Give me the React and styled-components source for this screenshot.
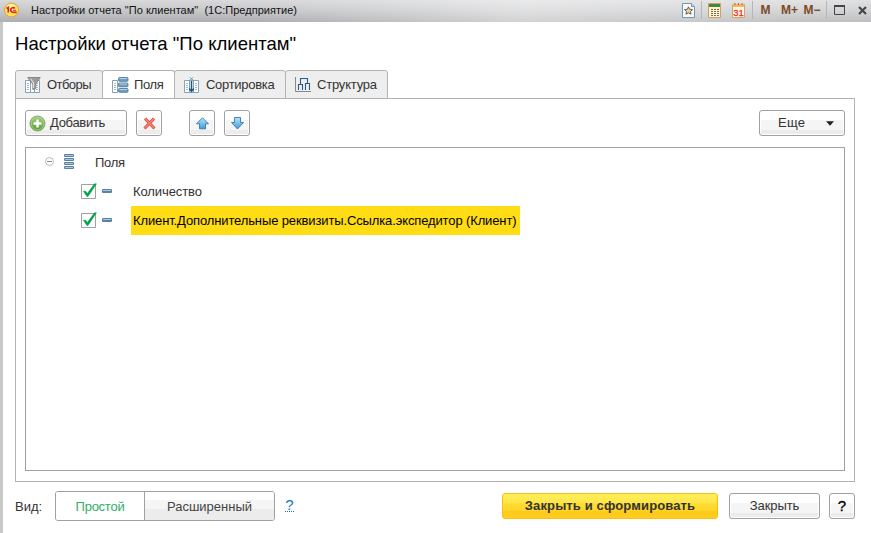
import React from "react";
import styled, { createGlobalStyle, css } from "styled-components";

const Global = createGlobalStyle`
  * { box-sizing: border-box; }
  body { margin: 0; background: #fff; overflow: hidden; }
  button { font: inherit; color: inherit; margin: 0; padding: 0; }
  svg { display: block; flex: none; }
`;

const Window = styled.div`
  width: 871px;
  height: 533px;
  display: flex;
  flex-direction: column;
  background: #fff;
  font: 13px/16px "Liberation Sans", Arial, sans-serif;
  color: #333;
`;

const TitleBar = styled.header`
  height: 22px;
  flex: none;
  display: flex;
  align-items: center;
  padding: 0 0 2px 4px;
  background: linear-gradient(90deg, rgba(255, 255, 255, 0) 30%, rgba(255, 255, 255, 0.45) 60%, rgba(255, 255, 255, 0.2)),
    linear-gradient(#d9d9da, #c6c7c9 50%, #acaeb1);
`;

const Text = styled.span`
  white-space: pre;
  letter-spacing: ${(p) => p.$track || 0}px;
`;

const Caption = styled(Text)`
  margin-left: 12px;
  flex: 1;
  font-size: 11px;
  color: #111;
`;

const Tools = styled.div`
  display: flex;
  align-items: center;
  height: 20px;
`;

const ToolSlot = styled.div`
  width: ${(p) => p.$w}px;
  margin-left: ${(p) => p.$gap || 0}px;
  height: 18px;
  display: flex;
  align-items: center;
  justify-content: center;
  font-weight: bold;
  font-size: 12px;
  color: #7d4a28;
  border-left: 1px solid ${(p) => (p.$line ? "#b4b6b9" : "transparent")};
`;

const Body = styled.main`
  flex: 1;
  display: flex;
  flex-direction: column;
  padding: 9px 16px 0 12px;
  border-left: 3px solid #c8c8c8;
`;

const Heading = styled.h1`
  margin: 0;
  height: 39px;
  font-size: 18.5px;
  line-height: 25px;
  font-weight: normal;
  color: #000;
`;

const Tabs = styled.nav`
  display: flex;
  height: 29px;
  flex: none;
  margin-bottom: -1px;
`;

const Tab = styled.button`
  width: ${(p) => p.$w}px;
  margin-right: -1px;
  height: 29px;
  display: flex;
  align-items: center;
  padding: 0 0 0 9px;
  gap: 6px;
  border: 1px solid #b3b3b3;
  border-radius: 3px 3px 0 0;
  background: #eee;
  ${(p) =>
    p.$active &&
    css`
      gap: 5px;
      background: #fff;
      border-bottom-color: #fff;
    `}
`;

const Panel = styled.section`
  width: 840px;
  height: 384px;
  flex: none;
  border: 1px solid #b3b3b3;
  padding: 11px 9px 10px;
  display: flex;
  flex-direction: column;
  gap: 11px;
`;

const Toolbar = styled.div`
  display: flex;
  height: 26px;
  flex: none;
`;

const Button = styled.button`
  width: ${(p) => p.$w}px;
  height: 26px;
  margin-left: ${(p) => p.$gap || 0}px;
  display: flex;
  align-items: center;
  justify-content: center;
  border: 1px solid #a0a0a0;
  border-radius: 3px;
  background: linear-gradient(#fff 0 38%, #f5f5f5 38% 80%, #ececec 80%);
  box-shadow: inset 0 0 0 1px #fff;
`;

const AddButton = styled(Button)`
  justify-content: flex-start;
  padding-left: 3px;
  gap: 4px;
`;

const MoreButton = styled(Button)`
  margin-left: auto;
  justify-content: flex-start;
  padding-left: 18px;
  gap: 21px;
`;

const PrimaryButton = styled(Button)`
  border-color: #fabd10;
  background: linear-gradient(#fff05c, #ffe548 38%, #ffdd32 40%, #ffd42a 70%, #ffca18 72%, #ffcd20);
  box-shadow: none;
  font-weight: bold;
`;

const Tree = styled.div`
  flex: 1;
  border: 1px solid #a0a0a0;
  background: #fff;
`;

const TreeRow = styled.div`
  height: 29px;
  display: flex;
  align-items: center;
  padding-left: ${(p) => p.$indent}px;
`;

const Cell = styled.div`
  width: ${(p) => p.$w}px;
  flex: none;
  padding-bottom: 2px;
`;

const ItemLabel = styled.div`
  height: 29px;
  display: flex;
  align-items: center;
  padding: 0 3px 0 2px;
  ${(p) =>
    p.$selected &&
    css`
      width: 389px;
      background: #ffdc14;
      color: #000;
    `}
`;

const Footer = styled.footer`
  display: flex;
  align-items: center;
  width: 840px;
  height: 30px;
  margin-top: 9px;
`;

const FieldLabel = styled.div`
  width: 40px;
  padding-top: 1px;
`;

const Segments = styled.div`
  width: 220px;
  height: 30px;
  display: flex;
  border: 1px solid #a0a0a0;
  border-radius: 3px;
  overflow: hidden;
`;

const Segment = styled.button`
  width: ${(p) => p.$w}px;
  padding-top: 1px;
  border: 0;
  color: ${(p) => (p.$active ? "#2fae66" : "#444")};
  background: ${(p) => (p.$active ? "#fff" : "linear-gradient(#fff 0 28%, #f5f5f5 28% 62%, #ececec 62%)")};
  & + & {
    border-left: 1px solid #a0a0a0;
  }
`;

const HelpLink = styled.a`
  margin: 0 auto 2px 10px;
  width: 9px;
  font-size: 15px;
  line-height: 13px;
  text-align: center;
  color: #1474c4;
  border-bottom: 1px dotted #1474c4;
`;

const HelpMark = styled.span`
  font-size: 15px;
  color: #000;
  -webkit-text-stroke: 0.3px #000;
`;

const Logo = () => (
  <svg width="15" height="16" viewBox="0 0 15 16">
    <circle cx="7.5" cy="8" r="7" fill="#ffe14f" stroke="#e0a050" />
    <circle cx="7" cy="6.500" r="4.500" fill="#fff3a8" />
    <path d="M2.500 6.500 4.300 5.500V10.500M10.800 6.500C9.800 5 6.700 5.500 6.700 8s1.800 2.300 6 2.300" fill="none" stroke="#e0201a" strokeWidth="1.700" />
    <path d="M9 8.300h3" stroke="#e0201a" />
  </svg>
);

const StarPage = () => (
  <svg width="13" height="15" viewBox="0 0 13 15">
    <path d="M.5.5h9l3 3v11H.5z" fill="#f5fafd" stroke="#7895ad" />
    <path d="M9.5.5v3h3" fill="#cddde9" stroke="#7895ad" />
    <path d="m6.5 3.8 1.2 2.5 2.8.3-2 1.9.5 2.7-2.5-1.3L4 11.2l.5-2.7-2-1.9 2.8-.3z" fill="#ead29c" stroke="#5e554b" strokeWidth=".9" />
  </svg>
);

const Calculator = () => (
  <svg width="13" height="15" viewBox="0 0 13 15">
    <path d="M.5.5h12v14H.5z" fill="#fff3d2" stroke="#cba06b" />
    <path d="M1 1h11v3H1z" fill="#3e8b3d" />
    {[6, 8, 10, 12].map((y) => (
      <path key={y} d={`M3 ${y}.5h8`} stroke={y === 6 ? "#bf4431" : "#6e7451"} strokeDasharray="2 1" />
    ))}
  </svg>
);

const Calendar = () => (
  <svg width="13" height="15" viewBox="0 0 13 15">
    <path d="M.5 1.5h12v13H.5z" fill="#fff6e4" stroke="#d8a368" />
    <path d="M1 1h11v3H1z" fill="#f3b75e" />
    <path d="M3 0v3M6.5 0v3M10 0v3" stroke="#a46a3e" strokeDasharray="2 1" />
    <text x="6.5" y="12.8" textAnchor="middle" fontFamily="Liberation Sans" fontWeight="normal" fontSize="9.500" fill="#f02a1c" stroke="#f02a1c" strokeWidth=".25">31</text>
  </svg>
);

const Maximize = () => (
  <svg width="11" height="10" viewBox="0 0 11 10">
    <path d="M.5 1.5h10v8H.5z" fill="none" stroke="#444" />
    <path d="M0 1h11" stroke="#444" strokeWidth="2" />
  </svg>
);

const Close = () => (
  <svg width="9" height="9" viewBox="0 0 9 9">
    <path d="m1 1 7 7M8 1 1 8" stroke="#444" strokeWidth="2.1" />
  </svg>
);

const Columns = ({ wide }) => (
  <>
    <path d="M.5 3.5h5v12h-5z" fill="#fff" stroke="#86a1b9" />
    <path d="M2 6.5h2M2 8.5h2M2 10.5h2M2 12.5h2" stroke="#a3b9cc" />
    {wide && (
      <>
        <path d="M9.5 3.5h5v12h-5z" fill="#fff" stroke="#86a1b9" />
        <path d="M11 6.5h2M11 8.5h2M11 10.5h2M11 12.5h2" stroke="#a3b9cc" />
      </>
    )}
  </>
);

const FilterIcon = () => (
  <svg width="16" height="16" viewBox="0 0 16 16">
    <Columns wide />
    <path d="M5.500 8v7.500h4V8" fill="#fff" stroke="#86a1b9" />
    <path d="M2.700.5h12.600L10.800 7v4.500l-3 1V7z" fill="#9b9b9b" stroke="#777" strokeWidth=".8" />
    <path d="M5.500 1.500 8.500 6v5" fill="none" stroke="#dedede" strokeWidth="1.200" />
  </svg>
);

const FieldsIcon = () => (
  <svg width="17" height="16" viewBox="0 0 17 16">
    <Columns />
    {[0, 5.5, 11].map((y) => (
      <g key={y}>
        <rect x="6.5" y={y + 0.5} width="9.500" height="3.800" rx="1" fill="#6f9dc0" stroke="#547c9e" strokeWidth=".9" />
        <path d={`M7.500 ${y + 1.5}h7.500`} stroke="#b5d1e5" />
      </g>
    ))}
  </svg>
);

const SortIcon = () => (
  <svg width="16" height="16" viewBox="0 0 16 16">
    <Columns wide />
    <path d="M5.5 3.5h4v12h-4z" fill="#d9edf9" stroke="#86a1b9" />
    <path d="M7.5 4v10M5.2 11.5l2.3 3 2.3-3" fill="none" stroke="#17568e" strokeWidth="1.3" />
    <path d="m5.5 0 4 3.5M9.5 0l-4 3.5" stroke="#3b88bd" strokeDasharray="1.2 .6" />
  </svg>
);

const StructureIcon = () => (
  <svg width="16" height="15" viewBox="0 0 16 15">
    <path d="M.5 0v14.5H16" fill="none" stroke="#888" />
    <path d="M3.500 13V7.500h4V13M5.500 7V1.500h7V6M10.500 13V6.500h4V13" fill="none" stroke="#2c5d88" strokeWidth="1.100" />
  </svg>
);

const PlusIcon = () => (
  <svg width="17" height="17" viewBox="0 0 17 17">
    <defs>
      <linearGradient id="plusFill" x2="0" y2="1">
        <stop stopColor="#a7d17d" />
        <stop offset="1" stopColor="#4f9b35" />
      </linearGradient>
    </defs>
    <circle cx="8.500" cy="8.500" r="7.500" fill="url(#plusFill)" stroke="#85a66f" />
    <circle cx="8.500" cy="8.500" r="6.300" fill="none" stroke="#b6d994" strokeWidth=".7" />
    <path d="M8.500 4.500v8M4.500 8.500h8" stroke="#fff" strokeWidth="2.400" />
  </svg>
);

const DeleteIcon = () => (
  <svg width="13" height="13" viewBox="0 0 13 13">
    <path d="m2 1.500 9.500 10M11 1.500 1.500 11.500" stroke="#d9473d" strokeWidth="3" />
    <path d="m2.200 1.700 9 9.500M10.800 1.700 1.700 11.200" stroke="#fb8370" strokeWidth="1.500" />
  </svg>
);

const Arrow = ({ down }) => (
  <svg width="13" height="13" viewBox="0 0 13 13">
    <defs>
      <linearGradient id="arrowFill" x2="0" y2="1">
        <stop stopColor="#b7e6fb" />
        <stop offset="1" stopColor="#3e9ad8" />
      </linearGradient>
    </defs>
    <path
      d={down ? "M3.500.5h6v5h3l-6 6.500-6-6.500h3z" : "M6.500.8l6 6h-3v5h-6v-5h-3z"}
      fill="url(#arrowFill)"
      stroke="#3b78a8"
      strokeWidth=".9"
    />
  </svg>
);

const Caret = () => (
  <svg width="8" height="5" viewBox="0 0 8 5">
    <path d="M0 .3h8L4 4.800z" fill="#222" />
  </svg>
);

const Collapse = () => (
  <svg width="9" height="9" viewBox="0 0 9 9">
    <circle cx="4.500" cy="4.500" r="4" fill="#fff" stroke="#aaa" strokeWidth=".8" />
    <path d="M2 4.500h5" stroke="#888" />
  </svg>
);

const Bar = ({ y = 0, h = 4 }) => (
  <>
    <rect x="0" y={y} width="10" height={h} rx="1" fill="#5c80a3" />
    <path d={`M1 ${y + 1.5}h8`} stroke="#a9c8df" />
  </>
);

const StackIcon = () => (
  <svg width="10" height="15" viewBox="0 0 10 15">
    {[0, 4, 8, 12].map((y) => (
      <Bar key={y} y={y} h={3} />
    ))}
  </svg>
);

const FieldIcon = () => (
  <svg width="10" height="4" viewBox="0 0 10 4">
    <Bar />
  </svg>
);

const Checked = () => (
  <svg width="16" height="16" viewBox="0 0 16 16">
    <path d="M.5 1.500h14v14H.5z" fill="#fff" stroke="#a0a0a0" />
    <path d="M2.300 8.200h2.500l1.500 2.300L13.500.8h2L7 13.500H6z" fill="#00a04c" stroke="#00a04c" strokeWidth=".5" />
  </svg>
);

const tabs = [
  { label: "Отборы", w: 88, Icon: FilterIcon, track: -0.55 },
  { label: "Поля", w: 73, Icon: FieldsIcon, track: -0.4, active: true },
  { label: "Сортировка", w: 112, Icon: SortIcon, track: -0.3 },
  { label: "Структура", w: 103, Icon: StructureIcon, track: -0.2 },
];

const items = [
  { label: "Количество", track: -0.1 },
  { label: "Клиент.Дополнительные реквизиты.Ссылка.экспедитор (Клиент)", track: -0.125, selected: true },
];

export default function App() {
  return (
    <Window>
      <Global />
      <TitleBar>
        <Logo />
        <Caption $track={0.02}>Настройки отчета "По клиентам"  (1С:Предприятие)</Caption>
        <Tools>
          <ToolSlot $w={27}><StarPage /></ToolSlot>
          <ToolSlot $w={26} $line><Calculator /></ToolSlot>
          <ToolSlot $w={22}><Calendar /></ToolSlot>
          <ToolSlot $w={26} $gap={3} $line>M</ToolSlot>
          <ToolSlot $w={22}>M+</ToolSlot>
          <ToolSlot $w={23}>M−</ToolSlot>
          <ToolSlot $w={26} $gap={3} $line><Maximize /></ToolSlot>
          <ToolSlot $w={19}><Close /></ToolSlot>
        </Tools>
      </TitleBar>
      <Body>
        <Heading><Text $track={0.03}>Настройки отчета "По клиентам"</Text></Heading>
        <Tabs>
          {tabs.map(({ label, w, Icon, track, active }) => (
            <Tab key={label} $w={w} $active={active}>
              <Icon />
              <Text $track={track}>{label}</Text>
            </Tab>
          ))}
        </Tabs>
        <Panel>
          <Toolbar>
            <AddButton $w={102}><PlusIcon /><Text $track={-0.3}>Добавить</Text></AddButton>
            <Button $w={26} $gap={9}><DeleteIcon /></Button>
            <Button $w={26} $gap={27}><Arrow /></Button>
            <Button $w={26} $gap={9}><Arrow down /></Button>
            <MoreButton $w={86}><Text $track={0.3}>Еще</Text><Caret /></MoreButton>
          </Toolbar>
          <Tree>
            <TreeRow $indent={19}>
              <Cell $w={19}><Collapse /></Cell>
              <Cell $w={31}><StackIcon /></Cell>
              <Text $track={-0.25}>Поля</Text>
            </TreeRow>
            {items.map(({ label, track, selected }) => (
              <TreeRow key={label} $indent={55}>
                <Cell $w={21}><Checked /></Cell>
                <Cell $w={29}><FieldIcon /></Cell>
                <ItemLabel $selected={selected}><Text $track={track}>{label}</Text></ItemLabel>
              </TreeRow>
            ))}
          </Tree>
        </Panel>
        <Footer>
          <FieldLabel><Text>Вид:</Text></FieldLabel>
          <Segments>
            <Segment $w={88} $active><Text $track={-0.25}>Простой</Text></Segment>
            <Segment $w={130}><Text>Расширенный</Text></Segment>
          </Segments>
          <HelpLink>?</HelpLink>
          <PrimaryButton $w={216}><Text $track={0.13}>Закрыть и сформировать</Text></PrimaryButton>
          <Button $w={91} $gap={11}><Text $track={-0.1}>Закрыть</Text></Button>
          <Button $w={26} $gap={9}><HelpMark>?</HelpMark></Button>
        </Footer>
      </Body>
    </Window>
  );
}
